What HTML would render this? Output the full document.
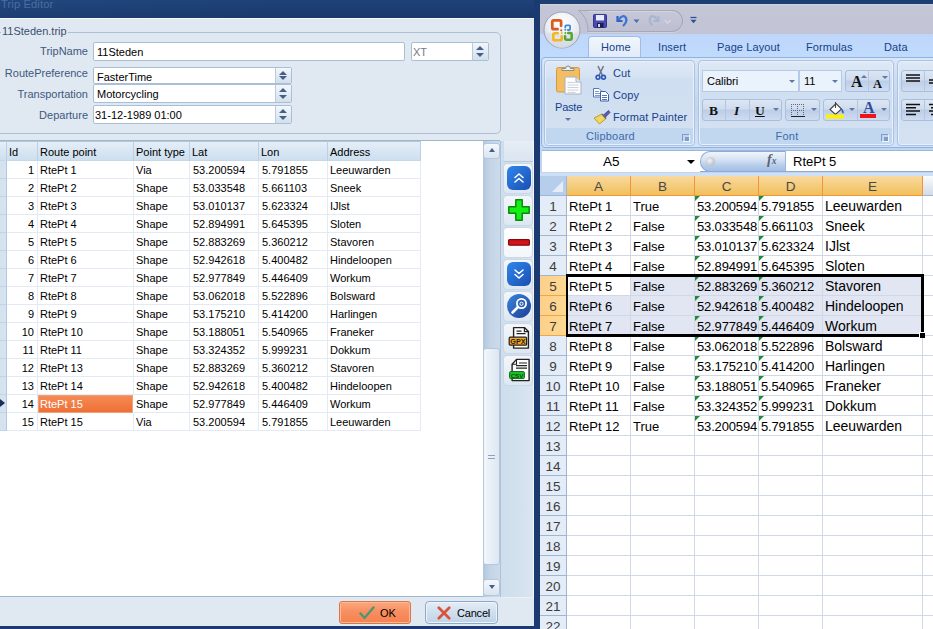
<!DOCTYPE html>
<html><head><meta charset="utf-8"><title>Trip Editor</title>
<style>
html,body{margin:0;padding:0}
body{width:933px;height:629px;overflow:hidden;position:relative;background:#1b3b70;font-family:"Liberation Sans",sans-serif;font-size:11px;color:#000}
div,span,i,b{box-sizing:border-box}
.abs{position:absolute}
/* ---------- Trip editor ---------- */
#te{position:absolute;left:0;top:0;width:534px;height:629px;overflow:hidden;background:#e0e9f1}
#te .title{position:absolute;left:0;top:0;width:534px;height:18px;background:linear-gradient(90deg,rgba(70,120,190,.08),rgba(40,80,150,0) 55%),linear-gradient(#1e4279,#1b3c70 60%,#1a396b);color:#4b6e9f;font-size:11.2px;line-height:14px;overflow:hidden}
#te .title span{position:absolute;left:1px;top:-3px;white-space:nowrap;letter-spacing:0.1px}
#te .topline{position:absolute;left:0;top:18px;width:534px;height:1px;background:#f6f9fc}
#te .botdark{position:absolute;left:0;top:626px;width:534px;height:3px;background:#1b3b70}
.gb{position:absolute;left:-6px;top:32px;width:507px;height:102px;border:1px solid #abc0d7;border-radius:5px}
.gbl{position:absolute;left:1px;top:24px;padding:0 1px 0 1px;background:#e0e9f1;color:#3a4f6e;font-size:11px;line-height:14px;white-space:nowrap}
.lbl{position:absolute;left:0;width:88px;text-align:right;color:#41587e;font-size:11px;line-height:14px;white-space:nowrap}
.inp{position:absolute;background:#fff;border:1px solid #a9bfd6;border-radius:2px;font-size:11px;line-height:14px;white-space:nowrap;overflow:hidden}
.inp span{position:absolute;left:3px;top:2px}
.spin{position:absolute;right:0;top:0;bottom:0;width:16px;border-left:1px solid #b9cbdf;background:linear-gradient(#f3f7fb,#d3dfec)}
.spin:before,.spin:after{content:"";position:absolute;left:3px;border-left:4px solid transparent;border-right:4px solid transparent}
.spin:before{top:3px;border-bottom:4px solid #44608a}
.spin:after{bottom:3px;border-top:4px solid #44608a}
/* grid */
.grid{position:absolute;left:0;top:0;width:500px;height:629px}
.gridbg{position:absolute;left:0;top:140px;width:500px;height:457px;background:#fff;border-top:1px solid #9fb6cf;border-bottom:1px solid #9fb6cf}
.ghead{position:absolute;top:141px;height:20px;border-top:1px solid #b4c6da;background:linear-gradient(#e4eef7,#cddfef);border-right:1px solid #bccfe3;border-bottom:1px solid #c6d7e8;font-size:11px;line-height:15px;white-space:nowrap;overflow:hidden;color:#000}
.ghead span{position:absolute;left:2px;top:3px}
.grow{position:absolute;left:0;width:421px;height:18px}
.gind{position:absolute;left:0;top:0;width:7px;height:18px;background:#d5e2f0;border-right:1px solid #b3c8de;border-bottom:1px solid #c2d3e6}
.gc{position:absolute;top:0;height:18px;border-right:1px solid #e3eaf3;border-bottom:1px solid #e3eaf3;font-size:11px;line-height:19px;padding-left:2px;white-space:nowrap;overflow:hidden}
.gc.id{text-align:right;padding-right:3px;padding-left:0}
.gc.num{padding-left:3px}
.gc.sel{background:linear-gradient(#f58a54,#ee7036);color:#fff;border:1px solid #f2a078;line-height:17px;padding-left:1px;box-shadow:1px 0 0 #fff}
.rowarrow{position:absolute;left:0;top:399px;width:0;height:0;border-top:4.500px solid transparent;border-bottom:4.500px solid transparent;border-left:5px solid #1b2f55}
.vsb{position:absolute;left:483px;top:141px;width:18px;height:456px;background:linear-gradient(90deg,#b2c6dc,#c3d4e7 40%,#ccdbea);border-right:1px solid #aec1d8}
.sbtn{position:absolute;left:0px;width:17px;height:16px;border:1px solid #b4c7dc;border-radius:3px;background:linear-gradient(#f4f8fc,#d9e4f0)}
.sbtn i{position:absolute;left:4.5px;border-left:3.5px solid transparent;border-right:3.5px solid transparent}
.sbtn i.up{top:4px;border-bottom:4px solid #44608a}
.sbtn i.dn{top:5px;border-top:4px solid #44608a}
.sthumb{position:absolute;left:0;top:207px;width:17px;height:217px;border:1px solid #b4c7dc;border-radius:3px;background:linear-gradient(90deg,#f2f6fb,#dde7f2)}
.sthumb i{position:absolute;left:4px;top:106px;width:7px;height:4px;border-top:1px solid #8aa2c0;border-bottom:1px solid #8aa2c0}

.sidebg{position:absolute;left:501px;top:141px;width:33px;height:457px;background:linear-gradient(90deg,#cedeec,#d4e2ef 70%,#dbe6f1);border-right:1px solid #f2f6fa;border-bottom:1px solid #eaf0f6}
.side{position:absolute;left:503px;top:141px;width:30px;height:260px}
.sblank{position:absolute;left:0;top:0;width:30px;height:21px;background:linear-gradient(#e6edf5,#dbe5f0);border-bottom:1px solid #b9c9dc;border-left:1px solid #cfdbe8}
.sb{position:absolute;left:0;width:30px;height:31px;border:1px solid #c9d7e6;border-radius:4px;background:linear-gradient(#f3f7fb,#dde7f1)}
.sb.white{background:linear-gradient(#fff,#f3f6fa)}
.sb svg{position:absolute}
.btn{position:absolute;top:601px;width:72px;height:23px;border-radius:3px;font-size:11px;line-height:21px}
.btn svg{position:absolute;top:4px}
.btn span{position:absolute;top:1px}
.btn.ok{left:339px;border:1px solid #dc7446;background:linear-gradient(#fba67d,#f78d5e 50%,#f5824f);box-shadow:inset 0 0 0 1px #fab999}
.btn.ok svg{left:19px}.btn.ok span{left:40px}
.btn.cancel{left:425px;width:73px;border:1px solid #8ea9c8;border-radius:4px;background:linear-gradient(#e4edf6,#d0dfee 50%,#bfd3e8);box-shadow:inset 0 0 0 1px #eef4fa}
.btn.cancel svg{left:10.500px;top:4px}.btn.cancel span{left:31px;letter-spacing:-0.2px}
.botline{position:absolute;left:0;top:596px;width:500px;height:1px;background:#9fb6cf}
/* ---------- Excel ---------- */
#xl{position:absolute;left:540px;top:0;width:393px;height:629px;overflow:hidden;background:#1d3e72;font-size:12px;color:#15428b}
.xtitle{position:absolute;left:0;top:4px;width:393px;height:30px;background:linear-gradient(#d2d3df,#c4c5d6 2px,#c2c3d5)}
.xtabs{position:absolute;left:0;top:34px;width:393px;height:596px;background:linear-gradient(#bdd6fa,#c1dbfd 25px,#bfdbff 25px)}
.qat{position:absolute;left:48px;top:10px;width:95px;height:22px;border:1px solid #a6a8bb;border-radius:0 11px 11px 0;border-left:none;background:linear-gradient(#c6c7d7,#bebfd1);box-shadow:inset 0 1px 0 #d4d5e1,0 1px 0 #d0d1de}
.orb{position:absolute;left:3px;top:11px;width:38px;height:38px}
.tab{position:absolute;top:40px;font-size:11px;line-height:14px;white-space:nowrap;color:#15428b;letter-spacing:0.1px}
.tab.home{left:48px;top:36px;width:53px;height:22px;padding:3px 0 0 12px;background:linear-gradient(#f1f6fd,#e1ebf8);border:1px solid #9dbce6;border-bottom:none;border-radius:4px 4px 0 0}
.ribbon{position:absolute;left:1px;top:57px;width:400px;height:91px;background:linear-gradient(#dbe7f6,#cddcf0 25%,#c3d6ee 60%,#d3e2f5);border:1px solid #8db2e3;border-radius:4px 0 0 4px}
.rg{position:absolute;top:60px;height:86px;border:1px solid #a8c3e6;border-radius:4px;background:linear-gradient(#dfe9f6,#d6e3f3 18%,#cfdef0 22%,#d3e1f2);box-shadow:inset 0 0 0 1px #e9f0fa}
.rgt{position:absolute;left:1px;right:1px;bottom:1px;height:16px;padding-right:18px;background:#c0d7ef;color:#3e6aaa;text-align:center;font-size:11px;line-height:17px;border-radius:0 0 3px 3px;letter-spacing:0.2px}
.dl{position:absolute;right:5px;bottom:4px;width:7px;height:7px;border-left:1px solid #7f9cc6;border-top:1px solid #7f9cc6;box-shadow:1px 1px 0 #eef4fc}
.dl:after{content:"";position:absolute;left:2px;top:2px;width:4px;height:4px;background:#7f9cc6;box-shadow:1px 1px 0 #eef4fc}
.rt{position:absolute;font-size:11px;line-height:16px;white-space:nowrap;color:#15428b;letter-spacing:0.1px}
.dd{position:absolute;width:0;height:0;border-left:3px solid transparent;border-right:3px solid transparent;border-top:3px solid #5f79a6}
.du{position:absolute;width:0;height:0;border-left:3px solid transparent;border-right:3px solid transparent;border-bottom:3px solid #5f79a6}
.combo{position:absolute;top:70px;height:22px;background:#eaf2fb;border:1px solid #b3cbe8;color:#000;font-size:11px;line-height:20px}
.combo span{position:absolute;left:4px;top:0}
.bg{position:absolute;height:22px;border:1px solid #a9bfdd;border-radius:3px;background:linear-gradient(#dce6f4,#cfdcee 45%,#bccde6 50%,#cedcf0);color:#111}
.bg u{position:absolute;top:0;width:1px;height:20px;background:#b4c6e0;text-decoration:none}
.bg span{position:absolute;line-height:20px}
.ser{font-family:"Liberation Serif",serif}
.fbar{position:absolute;left:0;top:148px;width:393px;height:28px;background:#bed6f3}
.fband{position:absolute;left:0;top:173px;width:393px;height:3px;background:#cfe0f5}
.fwhite{position:absolute;left:2px;top:150px;width:391px;height:22px;background:#fff;border-top:1px solid #9bb6da;border-bottom:1px solid #8ea9cf}
.namebox{position:absolute;left:2px;top:151px;width:158px;height:21px;background:#fff;color:#000;font-size:14px;line-height:21px}
.namebox span{position:absolute;left:61px;top:0;font-size:13.500px}
.ddk{position:absolute;left:145px;top:9px;width:0;height:0;border-left:4px solid transparent;border-right:4px solid transparent;border-top:4px solid #000}
.fpill{position:absolute;left:160px;top:151px;width:85px;height:21px;background:linear-gradient(#f0f5fb,#d6e3f3 40%,#b7cdeb 70%,#a2bfe7);border-radius:10px 0 0 10px;border:1px solid #8fabd3;border-right:none}
.fpill i{position:absolute;left:5px;top:5px;width:9px;height:9px;border-radius:5px;background:radial-gradient(circle at 40% 40%,#f4f4f6,#a3a9b8)}
.fx{position:absolute;left:66px;top:-2px;font-size:14px;font-style:italic;font-weight:bold;color:#5a6272;line-height:20px}
.fx small{font-size:9.500px}
.ftext{position:absolute;left:245px;top:151px;width:150px;height:20px;background:#fff;color:#000;font-size:13px;line-height:21px;padding-left:7px;border-left:1px solid #9db7da}
/* sheet */
.xl{position:absolute;left:-540px;top:0;width:933px;height:629px}
.xcorner{position:absolute;left:540px;top:176px;width:27px;height:20px;background:#b6cdec;border-right:1px solid #9eb6d8;border-bottom:1px solid #9eb6d8}
.xcorner i{position:absolute;right:3px;bottom:3px;width:0;height:0;border-left:11px solid transparent;border-bottom:11px solid #e4ecf7}
.xch{position:absolute;top:176px;height:20px;background:linear-gradient(#f9fcfd,#d3dbe9);border-right:1px solid #9eb6ce;border-bottom:1px solid #9eb6ce;text-align:center;font-size:13.500px;line-height:22px;color:#484848}
.xch.hot{background:linear-gradient(#f9d99f,#f1c05c);border-right:1px solid #f29536;border-bottom:1px solid #f29536}
.xrow{position:absolute;left:0;width:933px;height:20px}
.xrh{position:absolute;left:540px;top:0;width:27px;height:20px;background:#e4ecf7;border-right:1px solid #9eb6ce;border-bottom:1px solid #9eb6ce;text-align:center;font-size:13.500px;line-height:21px;color:#3c3c3c}
.xrh.hot{background:linear-gradient(90deg,#fbd08a,#ffd891);border-bottom:1px solid #eda648;border-right:1px solid #eda648}
.xc{position:absolute;top:0;height:20px;background:#fff;border-right:1px solid #d0d7e5;border-bottom:1px solid #d0d7e5;font-size:13px;line-height:21px;color:#000;padding-left:2px;white-space:nowrap;overflow:visible}
.xc.e{font-size:14px}
.xc.s{background:#e2e6f3}
.xc b{position:absolute;left:0;top:0;width:0;height:0;border-right:5px solid transparent;border-top:5px solid #1e8a3c}
.xc.n{letter-spacing:-0.15px}
.xsel{position:absolute;left:566px;top:274px;width:358px;height:63px;border:3px solid #000;border-left-width:2px}
.xselh{position:absolute;left:919px;top:332px;width:6px;height:6px;background:#000;border:1px solid #fff;border-right:none;border-bottom:none}
.spin.dis:before{border-bottom-color:#8390a5;left:4px;border-left-width:3px;border-right-width:3px;border-bottom-width:3px;top:4px}
.spin.dis:after{border-top-color:#8390a5;left:4px;border-left-width:3px;border-right-width:3px;border-top-width:3px;bottom:4px}

</style></head><body>
<div id="te">
<div class="title"><span>Trip Editor</span></div>
<div class="topline"></div>
<div class="gb"></div>
<div class="gbl">11Steden.trip</div>
<div class="lbl" style="top:44px">TripName</div>
<div class="inp" style="left:93px;top:42px;width:312px;height:19px"><span>11Steden</span></div>
<div class="inp" style="left:411px;top:42px;width:78px;height:19px;color:#777b82"><span style="left:1px">XT</span><div class="spin"></div></div>
<div class="lbl" style="top:66px">RoutePreference</div>
<div class="inp" style="left:93px;top:67px;width:199px;height:17px"><span>FasterTime</span><div class="spin"></div></div>
<div class="lbl" style="top:87px">Transportation</div>
<div class="inp" style="left:93px;top:84px;width:199px;height:19px"><span style="top:2px">Motorcycling</span><div class="spin"></div></div>
<div class="lbl" style="top:108px">Departure</div>
<div class="inp" style="left:93px;top:105px;width:199px;height:19px"><span style="left:1px">31-12-1989 01:00</span><div class="spin"></div></div>
<div class="gridbg"></div>
<div class="grid">
<div class="ghead" style="left:0;width:7px"></div>
<div class="ghead" style="left:7px;width:31px"><span>Id</span></div>
<div class="ghead" style="left:38px;width:96px"><span>Route point</span></div>
<div class="ghead" style="left:134px;width:56px"><span>Point type</span></div>
<div class="ghead" style="left:190px;width:69px"><span>Lat</span></div>
<div class="ghead" style="left:259px;width:69px"><span>Lon</span></div>
<div class="ghead" style="left:328px;width:93px"><span>Address</span></div>
<div class="grow" style="top:161px">
<div class="gind"></div>
<div class="gc id" style="left:7px;width:31px">1</div>
<div class="gc" style="left:38px;width:96px">RtePt 1</div>
<div class="gc" style="left:134px;width:56px">Via</div>
<div class="gc num" style="left:190px;width:69px">53.200594</div>
<div class="gc num" style="left:259px;width:69px">5.791855</div>
<div class="gc" style="left:328px;width:93px">Leeuwarden</div>
</div>
<div class="grow" style="top:179px">
<div class="gind"></div>
<div class="gc id" style="left:7px;width:31px">2</div>
<div class="gc" style="left:38px;width:96px">RtePt 2</div>
<div class="gc" style="left:134px;width:56px">Shape</div>
<div class="gc num" style="left:190px;width:69px">53.033548</div>
<div class="gc num" style="left:259px;width:69px">5.661103</div>
<div class="gc" style="left:328px;width:93px">Sneek</div>
</div>
<div class="grow" style="top:197px">
<div class="gind"></div>
<div class="gc id" style="left:7px;width:31px">3</div>
<div class="gc" style="left:38px;width:96px">RtePt 3</div>
<div class="gc" style="left:134px;width:56px">Shape</div>
<div class="gc num" style="left:190px;width:69px">53.010137</div>
<div class="gc num" style="left:259px;width:69px">5.623324</div>
<div class="gc" style="left:328px;width:93px">IJlst</div>
</div>
<div class="grow" style="top:215px">
<div class="gind"></div>
<div class="gc id" style="left:7px;width:31px">4</div>
<div class="gc" style="left:38px;width:96px">RtePt 4</div>
<div class="gc" style="left:134px;width:56px">Shape</div>
<div class="gc num" style="left:190px;width:69px">52.894991</div>
<div class="gc num" style="left:259px;width:69px">5.645395</div>
<div class="gc" style="left:328px;width:93px">Sloten</div>
</div>
<div class="grow" style="top:233px">
<div class="gind"></div>
<div class="gc id" style="left:7px;width:31px">5</div>
<div class="gc" style="left:38px;width:96px">RtePt 5</div>
<div class="gc" style="left:134px;width:56px">Shape</div>
<div class="gc num" style="left:190px;width:69px">52.883269</div>
<div class="gc num" style="left:259px;width:69px">5.360212</div>
<div class="gc" style="left:328px;width:93px">Stavoren</div>
</div>
<div class="grow" style="top:251px">
<div class="gind"></div>
<div class="gc id" style="left:7px;width:31px">6</div>
<div class="gc" style="left:38px;width:96px">RtePt 6</div>
<div class="gc" style="left:134px;width:56px">Shape</div>
<div class="gc num" style="left:190px;width:69px">52.942618</div>
<div class="gc num" style="left:259px;width:69px">5.400482</div>
<div class="gc" style="left:328px;width:93px">Hindeloopen</div>
</div>
<div class="grow" style="top:269px">
<div class="gind"></div>
<div class="gc id" style="left:7px;width:31px">7</div>
<div class="gc" style="left:38px;width:96px">RtePt 7</div>
<div class="gc" style="left:134px;width:56px">Shape</div>
<div class="gc num" style="left:190px;width:69px">52.977849</div>
<div class="gc num" style="left:259px;width:69px">5.446409</div>
<div class="gc" style="left:328px;width:93px">Workum</div>
</div>
<div class="grow" style="top:287px">
<div class="gind"></div>
<div class="gc id" style="left:7px;width:31px">8</div>
<div class="gc" style="left:38px;width:96px">RtePt 8</div>
<div class="gc" style="left:134px;width:56px">Shape</div>
<div class="gc num" style="left:190px;width:69px">53.062018</div>
<div class="gc num" style="left:259px;width:69px">5.522896</div>
<div class="gc" style="left:328px;width:93px">Bolsward</div>
</div>
<div class="grow" style="top:305px">
<div class="gind"></div>
<div class="gc id" style="left:7px;width:31px">9</div>
<div class="gc" style="left:38px;width:96px">RtePt 9</div>
<div class="gc" style="left:134px;width:56px">Shape</div>
<div class="gc num" style="left:190px;width:69px">53.175210</div>
<div class="gc num" style="left:259px;width:69px">5.414200</div>
<div class="gc" style="left:328px;width:93px">Harlingen</div>
</div>
<div class="grow" style="top:323px">
<div class="gind"></div>
<div class="gc id" style="left:7px;width:31px">10</div>
<div class="gc" style="left:38px;width:96px">RtePt 10</div>
<div class="gc" style="left:134px;width:56px">Shape</div>
<div class="gc num" style="left:190px;width:69px">53.188051</div>
<div class="gc num" style="left:259px;width:69px">5.540965</div>
<div class="gc" style="left:328px;width:93px">Franeker</div>
</div>
<div class="grow" style="top:341px">
<div class="gind"></div>
<div class="gc id" style="left:7px;width:31px">11</div>
<div class="gc" style="left:38px;width:96px">RtePt 11</div>
<div class="gc" style="left:134px;width:56px">Shape</div>
<div class="gc num" style="left:190px;width:69px">53.324352</div>
<div class="gc num" style="left:259px;width:69px">5.999231</div>
<div class="gc" style="left:328px;width:93px">Dokkum</div>
</div>
<div class="grow" style="top:359px">
<div class="gind"></div>
<div class="gc id" style="left:7px;width:31px">12</div>
<div class="gc" style="left:38px;width:96px">RtePt 13</div>
<div class="gc" style="left:134px;width:56px">Shape</div>
<div class="gc num" style="left:190px;width:69px">52.883269</div>
<div class="gc num" style="left:259px;width:69px">5.360212</div>
<div class="gc" style="left:328px;width:93px">Stavoren</div>
</div>
<div class="grow" style="top:377px">
<div class="gind"></div>
<div class="gc id" style="left:7px;width:31px">13</div>
<div class="gc" style="left:38px;width:96px">RtePt 14</div>
<div class="gc" style="left:134px;width:56px">Shape</div>
<div class="gc num" style="left:190px;width:69px">52.942618</div>
<div class="gc num" style="left:259px;width:69px">5.400482</div>
<div class="gc" style="left:328px;width:93px">Hindeloopen</div>
</div>
<div class="grow" style="top:395px">
<div class="gind"></div>
<div class="gc id" style="left:7px;width:31px">14</div>
<div class="gc sel" style="left:38px;width:95px">RtePt 15</div>
<div class="gc" style="left:134px;width:56px">Shape</div>
<div class="gc num" style="left:190px;width:69px">52.977849</div>
<div class="gc num" style="left:259px;width:69px">5.446409</div>
<div class="gc" style="left:328px;width:93px">Workum</div>
</div>
<div class="grow" style="top:413px">
<div class="gind"></div>
<div class="gc id" style="left:7px;width:31px">15</div>
<div class="gc" style="left:38px;width:96px">RtePt 15</div>
<div class="gc" style="left:134px;width:56px">Via</div>
<div class="gc num" style="left:190px;width:69px">53.200594</div>
<div class="gc num" style="left:259px;width:69px">5.791855</div>
<div class="gc" style="left:328px;width:93px">Leeuwarden</div>
</div>
<div class="rowarrow"></div>
</div><!-- scrollbar -->
<div class="vsb">
<div class="sbtn" style="top:2px"><i class="up"></i></div>
<div class="sthumb"><i></i></div>
<div class="sbtn" style="top:438px;height:17px"><i class="dn"></i></div>
</div>
<!-- side buttons -->
<div class="sidebg"></div>
<div class="side">
<div class="sblank"></div>
<div class="sb" style="top:22px"><svg width="24" height="24" viewBox="0 0 24 24" style="left:3px;top:2px"><defs><linearGradient id="bl" x1="0" y1="0" x2="1" y2="1"><stop offset="0" stop-color="#2f86ee"/><stop offset="1" stop-color="#1a4fb0"/></linearGradient></defs><rect width="24" height="24" rx="6" fill="url(#bl)"/><path d="M8 11.5 L12 8 L16 11.5 M8 16 L12 12.5 L16 16" fill="none" stroke="#fff" stroke-width="1.6" stroke-linecap="round" stroke-linejoin="round"/></svg></div>
<div class="sb" style="top:54px"><svg width="24" height="24" viewBox="0 0 24 24" style="left:3px;top:2px"><path d="M8.800 1.800h6.400v7h7v6.400h-7v7h-6.400v-7h-7v-6.400h7z" fill="#14f014" stroke="#0a8a0a" stroke-width="1.500" stroke-linejoin="round"/></svg></div>
<div class="sb white" style="top:86px"><svg width="24" height="9" viewBox="0 0 24 9" style="left:3px;top:10px"><rect x="1.600" y="1.600" width="20.800" height="5.600" rx="1" fill="#d41219" stroke="#86090e" stroke-width="1.200"/></svg></div>
<div class="sb" style="top:118px"><svg width="24" height="24" viewBox="0 0 24 24" style="left:3px;top:2px"><rect width="24" height="24" rx="6" fill="url(#bl)"/><path d="M8 8 L12 11.5 L16 8 M8 12.5 L12 16 L16 12.5" fill="none" stroke="#fff" stroke-width="1.6" stroke-linecap="round" stroke-linejoin="round"/></svg></div>
<div class="sb" style="top:150px"><svg width="24" height="24" viewBox="0 0 24 24" style="left:3px;top:2px"><defs><linearGradient id="bl2" x1="0" y1="0" x2="1" y2="1"><stop offset="0" stop-color="#3a86e0"/><stop offset="1" stop-color="#1c3f94"/></linearGradient></defs><circle cx="12" cy="12" r="12" fill="url(#bl2)"/><circle cx="14.5" cy="9.5" r="4.6" fill="none" stroke="#fff" stroke-width="1.8"/><circle cx="14.5" cy="9.8" r="1.6" fill="none" stroke="#fff" stroke-width="1"/><path d="M11 13 L5.5 18.5" stroke="#fff" stroke-width="2.6" stroke-linecap="round"/></svg></div>
<div class="sb" style="top:182px"><svg width="24" height="26" viewBox="0 0 24 26" style="left:3px;top:2px"><path d="M6.600 1.600h10.800l4 4v16.500h-14.800z" fill="#fff" stroke="#222" stroke-width="1.400" stroke-linejoin="round"/><path d="M17.400 1.600v4h4" fill="none" stroke="#222" stroke-width="1.200"/><path d="M9.500 5.200h5M9.500 7.600h9" stroke="#222" stroke-width="1.200"/><rect x="2.200" y="11.200" width="17.400" height="8" rx="1" fill="#f2a51d" stroke="#222" stroke-width="1.200"/><text x="10.900" y="18" font-family="Liberation Sans, sans-serif" font-size="7.200" font-weight="bold" text-anchor="middle" fill="#222">GPX</text></svg></div>
<div class="sb" style="top:214px"><svg width="24" height="26" viewBox="0 0 24 26" style="left:3px;top:2px"><path d="M9.500 1.400h12.600v21.200h-17v-16.400z" fill="#fff" stroke="#222" stroke-width="1.400" stroke-linejoin="round"/><path d="M9.500 1.400v4.800h-4.400" fill="none" stroke="#222" stroke-width="1.100"/><path d="M12 5h8M9 7.600h11M9 10.200h11" stroke="#222" stroke-width="1.200"/><rect x="2.600" y="13.600" width="14.800" height="7" rx="1" fill="#1fc128" stroke="#0d6a14" stroke-width="1"/><text x="10" y="19.600" font-family="Liberation Sans, sans-serif" font-size="6.200" font-weight="bold" text-anchor="middle" fill="#0b4d10">CSV</text></svg></div>
</div>
<!-- bottom buttons -->
<div class="btn ok"><svg width="16" height="14" viewBox="0 0 16 14"><path d="M1.500 7.500 L5.500 12 L14.500 1.500" fill="none" stroke="#4f9672" stroke-width="2.400" stroke-linecap="round" stroke-linejoin="round"/></svg><span>OK</span></div>
<div class="btn cancel"><svg width="14" height="14" viewBox="0 0 14 14"><path d="M1.800 1.800 L12.200 12.200 M12.200 1.800 L1.800 12.200" fill="none" stroke="#d8533a" stroke-width="2.700" stroke-linecap="round"/></svg><span>Cancel</span></div>
<div class="botdark"></div>
</div>
<div id="xl">
<div class="xtitle"></div>
<div class="xtabs"></div>
<div class="qat"></div>
<svg class="abs" style="left:30px;top:8px" width="20" height="26" viewBox="30 8 20 26"><path d="M38.600 10.500 L48.500 10.500 L48.500 31.500 L48 31.500 A26 26 0 0 0 38.600 10.500 Z" fill="#c2c3d4"/><path d="M38.600 10.500 A26 26 0 0 1 48 31.500" fill="none" stroke="#a6a8bb" stroke-width="1"/><path d="M38.600 10.500 H49" stroke="#a6a8bb" stroke-width="1"/><path d="M47.500 31.500 H49" stroke="#a6a8bb" stroke-width="1"/></svg>
<div class="orb"><svg width="38" height="38" viewBox="0 0 38 38"><defs><radialGradient id="og" cx="0.5" cy="0.3" r="0.8"><stop offset="0" stop-color="#ffffff"/><stop offset="0.55" stop-color="#e9edf3"/><stop offset="1" stop-color="#b8c0cf"/></radialGradient></defs><circle cx="19" cy="19" r="18" fill="url(#og)" stroke="#9aa3b8" stroke-width="1"/><path d="M3 21 A16 16 0 0 0 35 21 Q19 26 3 21z" fill="#d9dee8" opacity="0.7"/>
<path d="M18.100 14.800 V10.800 Q18.100 9.300 16.600 9.300 H10.800 Q9.300 9.300 9.300 10.800 V16.700 Q9.300 18.200 10.800 18.200 H14.600" fill="none" stroke="#dc5a1c" stroke-width="2.700" stroke-linecap="round"/>
<path d="M22.300 16.400 V15.200 Q22.300 14.300 23.200 14.300 H26.200 Q27.100 14.300 27.100 15.200 V18.100 Q27.100 19 26.200 19 H24.900" fill="none" stroke="#3d8ad6" stroke-width="1.800" stroke-linecap="round"/>
<path d="M14.800 22.200 H11.600 Q10.300 22.200 10.300 23.500 V27.900 Q10.300 29.200 11.600 29.200 H17.400 Q18.700 29.200 18.700 27.900 V25.400" fill="none" stroke="#f4b81e" stroke-width="2.600" stroke-linecap="round"/>
<path d="M25.200 22.100 H27.500 Q28.700 22.100 28.700 23.300 V27.600 Q28.700 28.800 27.500 28.800 H23.300 Q22.100 28.800 22.100 27.600 V25.300" fill="none" stroke="#58a42e" stroke-width="2.500" stroke-linecap="round"/>
<circle cx="18.300" cy="19.300" r="1.100" fill="#dc5a1c"/><circle cx="22.300" cy="18.800" r="1" fill="#3d8ad6"/><circle cx="18.800" cy="22.100" r="1" fill="#f4b81e"/><circle cx="22.300" cy="22.100" r="1" fill="#58a42e"/></svg></div>
<svg class="abs" style="left:53px;top:12px" width="110" height="18" viewBox="0 0 110 18">
<rect x="0.500" y="2.500" width="13" height="13" rx="1" fill="#4a4ab2" stroke="#34348c" stroke-width="1"/><rect x="3" y="3" width="8" height="5.500" fill="#e9ecf8"/><rect x="4" y="11" width="6.500" height="4.500" fill="#1d1d4a"/><rect x="5" y="12" width="2" height="3" fill="#d0d4ee"/>
<path d="M24.500 4 L24.500 9 L29.500 9" fill="none" stroke="#2f62c4" stroke-width="2.200"/><path d="M25.500 8 Q30 1.500 33 6 Q34.500 10 30 14" fill="none" stroke="#3d74d6" stroke-width="2.300"/>
<path d="M40.500 7.500 h6 l-3 3.500z" fill="#4f6fae"/>
<path d="M65.500 4 L65.500 9 L60.500 9" fill="none" stroke="#a9b4cf" stroke-width="2"/><path d="M64.500 8 Q60 1.500 57 6 Q55.500 10 59.500 13.500" fill="none" stroke="#a9b4cf" stroke-width="2.100"/>
<path d="M71.500 8 l3 3 l3 -3" fill="none" stroke="#d3d7e6" stroke-width="1.300"/>
<path d="M97.500 5.500 h6" stroke="#2d4f9a" stroke-width="1.300"/><path d="M97.500 7.800 h6 l-3 3.400z" fill="#2d4f9a"/>
</svg>
<div class="tab home">Home</div>
<div class="tab" style="left:118px">Insert</div>
<div class="tab" style="left:177px">Page Layout</div>
<div class="tab" style="left:266px">Formulas</div>
<div class="tab" style="left:344px">Data</div>
<div class="ribbon"></div>
<!-- clipboard group -->
<div class="rg" style="left:4px;width:151px"><div class="rgt">Clipboard</div><i class="dl"></i></div>
<svg class="abs" style="left:15px;top:64px" width="28" height="32" viewBox="0 0 28 32">
<rect x="1.500" y="3.500" width="23" height="24.500" rx="2" fill="#f3bd62" stroke="#d39a40" stroke-width="1"/><path d="M7 6.500 h12 v-2 h-3.500 a2.500 2.500 0 0 0 -5 0 h-3.500z" fill="#ececec" stroke="#8b8b8b" stroke-width="1"/><path d="M10 13h11l5 5v12h-16z" fill="#fdfdfd" stroke="#a8b2c2" stroke-width="1"/><path d="M21 13v5h5" fill="#e4e8ee" stroke="#a8b2c2" stroke-width="1"/><path d="M12.500 18.500h8M12.500 21h11M12.500 23.500h11M12.500 26h11M12.500 28.400h8" stroke="#ccd2dc" stroke-width="1"/></svg>
<div class="rt" style="left:15px;top:99px;letter-spacing:-0.2px">Paste</div>
<i class="dd" style="left:25px;top:118px"></i>
<svg class="abs" style="left:55px;top:65px" width="12" height="16" viewBox="0 0 12 16"><path d="M3 1 L7.500 10.500 M8.500 1 L4 10.500" stroke="#6c7686" stroke-width="1.500"/><circle cx="3" cy="12.300" r="1.900" fill="none" stroke="#2f56b8" stroke-width="1.600"/><circle cx="8.500" cy="12.300" r="1.900" fill="none" stroke="#2f56b8" stroke-width="1.600"/></svg>
<div class="rt" style="left:73px;top:65px">Cut</div>
<svg class="abs" style="left:53px;top:88px" width="17" height="14" viewBox="0 0 17 14"><path d="M0.500 0.500h5.500l2.500 2.500v6h-8z" fill="#fff" stroke="#5a78b4" stroke-width="1"/><path d="M2 3.500h4M2 5.500h5M2 7.500h5" stroke="#7f9ad0" stroke-width="1"/><path d="M7.500 3.500h5l3 3v6.500h-8z" fill="#fff" stroke="#3a5ea8" stroke-width="1"/><path d="M9 7.500h5M9 9.500h5M9 11.500h5" stroke="#4f74c0" stroke-width="1"/></svg>
<div class="rt" style="left:73px;top:87px">Copy</div>
<svg class="abs" style="left:53px;top:109px" width="18" height="16" viewBox="0 0 18 16"><path d="M10.500 6 L15.500 1.500 L17 3.500 L12.500 8z" fill="#5b5bb8" stroke="#38388a" stroke-width="0.800"/><path d="M1 9 L9 5 L13 9.500 L6.500 15z" fill="#f2d660" stroke="#b3952a" stroke-width="0.900"/><path d="M9 5 L13 9.500" stroke="#666" stroke-width="1.400"/></svg>
<div class="rt" style="left:73px;top:109px">Format Painter</div>
<!-- font group -->
<div class="rg" style="left:158px;width:196px"><div class="rgt">Font</div><i class="dl"></i></div>
<div class="combo" style="left:162px;width:97px"><span>Calibri</span><i class="dd" style="left:86px;top:9px"></i></div>
<div class="combo" style="left:259px;width:43px"><span>11</span><i class="dd" style="left:32px;top:9px"></i></div>
<div class="bg" style="left:305px;top:70px;width:45px"><u style="left:22px"></u>
<span class="ser" style="left:5px;top:1px;font-size:16px;font-weight:bold">A</span><i class="du" style="left:15px;top:4px"></i>
<span class="ser" style="left:27px;top:3px;font-size:12.500px;font-weight:bold">A</span><i class="dd" style="left:36px;top:5px"></i></div>
<div class="bg" style="left:162px;top:99px;width:80px"><u style="left:22px"></u><u style="left:46px"></u>
<span class="ser" style="left:6px;top:1px;font-size:13.500px;font-weight:bold">B</span>
<span class="ser" style="left:31px;top:1px;font-size:13.500px;font-weight:bold;font-style:italic">I</span>
<span class="ser" style="left:52px;top:1px;font-size:13.500px;font-weight:bold;text-decoration:underline">U</span><i class="dd" style="left:70px;top:8px"></i></div>
<div class="bg" style="left:245px;top:99px;width:35px"><svg class="abs" style="left:4px;top:3px" width="15" height="15" viewBox="0 0 15 15" shape-rendering="crispEdges"><path d="M1 1.500h13M1 7.500h13M1.500 1v12M7.500 1v12M13.500 1v12" stroke="#5c6780" stroke-width="1" stroke-dasharray="1 1"/><path d="M0.500 13.500h14" stroke="#222" stroke-width="1.600"/></svg><i class="dd" style="left:25px;top:8px"></i></div>
<div class="bg" style="left:283px;top:99px;width:67px"><u style="left:33px"></u>
<svg class="abs" style="left:2px;top:1px" width="20" height="18" viewBox="0 0 20 18"><path d="M4 8.500 L10 2.500 L15.500 8 L9.500 13.500z" fill="#fff" stroke="#444" stroke-width="1.100"/><path d="M9.500 1 v6" stroke="#444" stroke-width="1.100"/><path d="M15.500 7.500 q3 2 2 5.500 q-2.500 -1.500 -2 -5.500z" fill="#2d5fc8"/><rect x="0" y="13.500" width="18" height="4" fill="#fff200"/></svg><i class="dd" style="left:25px;top:8px"></i>
<span class="ser" style="left:39px;top:-2px;font-size:16px;font-weight:bold;color:#2a4f9c">A</span><div class="abs" style="left:36px;top:14px;width:16px;height:4px;background:#f01414"></div><i class="dd" style="left:57px;top:8px"></i></div>
<!-- align group -->
<div class="rg" style="left:357px;width:60px"></div>
<div class="bg" style="left:361px;top:70px;width:50px"><u style="left:22px"></u><svg class="abs" style="left:4px;top:3px" width="40" height="12" viewBox="0 0 40 12"><path d="M0 1h14M0 4h14M0 7h14M23 6h14M23 9h14" stroke="#111" stroke-width="1.400"/></svg></div>
<div class="bg" style="left:361px;top:99px;width:50px"><u style="left:22px"></u><svg class="abs" style="left:4px;top:3px" width="40" height="14" viewBox="0 0 40 14"><path d="M0 1.500h14M0 4.800h10M0 8.100h14M0 11.400h10M23 1.500h14M25 4.800h10M23 8.100h14M25 11.400h10" stroke="#111" stroke-width="1.500"/></svg></div>
<!-- formula bar -->
<div class="fbar"></div><div class="fband"></div><div class="fwhite"></div>
<div class="namebox"><span>A5</span><i class="ddk"></i></div>
<div class="fpill"><i></i><span class="ser fx">f<small>x</small></span></div>
<div class="ftext">RtePt 5</div>
<div class="xl">
<div class="xcorner"><i></i></div>
<div class="xch hot" style="left:567px;width:64px">A</div>
<div class="xch hot" style="left:631px;width:64px">B</div>
<div class="xch hot" style="left:695px;width:64px">C</div>
<div class="xch hot" style="left:759px;width:64px">D</div>
<div class="xch hot" style="left:823px;width:100px">E</div>
<div class="xch" style="left:923px;width:64px"></div>
<div class="xrow" style="top:196px">
<div class="xrh">1</div>
<div class="xc" style="left:567px;width:64px">RtePt 1</div>
<div class="xc" style="left:631px;width:64px">True</div>
<div class="xc n" style="left:695px;width:64px"><b></b>53.200594</div>
<div class="xc n" style="left:759px;width:64px"><b></b>5.791855</div>
<div class="xc e" style="left:823px;width:100px">Leeuwarden</div>
<div class="xc" style="left:923px;width:64px"></div>
</div>
<div class="xrow" style="top:216px">
<div class="xrh">2</div>
<div class="xc" style="left:567px;width:64px">RtePt 2</div>
<div class="xc" style="left:631px;width:64px">False</div>
<div class="xc n" style="left:695px;width:64px"><b></b>53.033548</div>
<div class="xc n" style="left:759px;width:64px"><b></b>5.661103</div>
<div class="xc e" style="left:823px;width:100px">Sneek</div>
<div class="xc" style="left:923px;width:64px"></div>
</div>
<div class="xrow" style="top:236px">
<div class="xrh">3</div>
<div class="xc" style="left:567px;width:64px">RtePt 3</div>
<div class="xc" style="left:631px;width:64px">False</div>
<div class="xc n" style="left:695px;width:64px"><b></b>53.010137</div>
<div class="xc n" style="left:759px;width:64px"><b></b>5.623324</div>
<div class="xc e" style="left:823px;width:100px">IJlst</div>
<div class="xc" style="left:923px;width:64px"></div>
</div>
<div class="xrow" style="top:256px">
<div class="xrh">4</div>
<div class="xc" style="left:567px;width:64px">RtePt 4</div>
<div class="xc" style="left:631px;width:64px">False</div>
<div class="xc n" style="left:695px;width:64px"><b></b>52.894991</div>
<div class="xc n" style="left:759px;width:64px"><b></b>5.645395</div>
<div class="xc e" style="left:823px;width:100px">Sloten</div>
<div class="xc" style="left:923px;width:64px"></div>
</div>
<div class="xrow" style="top:276px">
<div class="xrh hot">5</div>
<div class="xc" style="left:567px;width:64px">RtePt 5</div>
<div class="xc s" style="left:631px;width:64px">False</div>
<div class="xc n s" style="left:695px;width:64px"><b></b>52.883269</div>
<div class="xc n s" style="left:759px;width:64px"><b></b>5.360212</div>
<div class="xc e s" style="left:823px;width:100px">Stavoren</div>
<div class="xc" style="left:923px;width:64px"></div>
</div>
<div class="xrow" style="top:296px">
<div class="xrh hot">6</div>
<div class="xc s" style="left:567px;width:64px">RtePt 6</div>
<div class="xc s" style="left:631px;width:64px">False</div>
<div class="xc n s" style="left:695px;width:64px"><b></b>52.942618</div>
<div class="xc n s" style="left:759px;width:64px"><b></b>5.400482</div>
<div class="xc e s" style="left:823px;width:100px">Hindeloopen</div>
<div class="xc" style="left:923px;width:64px"></div>
</div>
<div class="xrow" style="top:316px">
<div class="xrh hot">7</div>
<div class="xc s" style="left:567px;width:64px">RtePt 7</div>
<div class="xc s" style="left:631px;width:64px">False</div>
<div class="xc n s" style="left:695px;width:64px"><b></b>52.977849</div>
<div class="xc n s" style="left:759px;width:64px"><b></b>5.446409</div>
<div class="xc e s" style="left:823px;width:100px">Workum</div>
<div class="xc" style="left:923px;width:64px"></div>
</div>
<div class="xrow" style="top:336px">
<div class="xrh">8</div>
<div class="xc" style="left:567px;width:64px">RtePt 8</div>
<div class="xc" style="left:631px;width:64px">False</div>
<div class="xc n" style="left:695px;width:64px"><b></b>53.062018</div>
<div class="xc n" style="left:759px;width:64px"><b></b>5.522896</div>
<div class="xc e" style="left:823px;width:100px">Bolsward</div>
<div class="xc" style="left:923px;width:64px"></div>
</div>
<div class="xrow" style="top:356px">
<div class="xrh">9</div>
<div class="xc" style="left:567px;width:64px">RtePt 9</div>
<div class="xc" style="left:631px;width:64px">False</div>
<div class="xc n" style="left:695px;width:64px"><b></b>53.175210</div>
<div class="xc n" style="left:759px;width:64px"><b></b>5.414200</div>
<div class="xc e" style="left:823px;width:100px">Harlingen</div>
<div class="xc" style="left:923px;width:64px"></div>
</div>
<div class="xrow" style="top:376px">
<div class="xrh">10</div>
<div class="xc" style="left:567px;width:64px">RtePt 10</div>
<div class="xc" style="left:631px;width:64px">False</div>
<div class="xc n" style="left:695px;width:64px"><b></b>53.188051</div>
<div class="xc n" style="left:759px;width:64px"><b></b>5.540965</div>
<div class="xc e" style="left:823px;width:100px">Franeker</div>
<div class="xc" style="left:923px;width:64px"></div>
</div>
<div class="xrow" style="top:396px">
<div class="xrh">11</div>
<div class="xc" style="left:567px;width:64px">RtePt 11</div>
<div class="xc" style="left:631px;width:64px">False</div>
<div class="xc n" style="left:695px;width:64px"><b></b>53.324352</div>
<div class="xc n" style="left:759px;width:64px"><b></b>5.999231</div>
<div class="xc e" style="left:823px;width:100px">Dokkum</div>
<div class="xc" style="left:923px;width:64px"></div>
</div>
<div class="xrow" style="top:416px">
<div class="xrh">12</div>
<div class="xc" style="left:567px;width:64px">RtePt 12</div>
<div class="xc" style="left:631px;width:64px">True</div>
<div class="xc n" style="left:695px;width:64px"><b></b>53.200594</div>
<div class="xc n" style="left:759px;width:64px"><b></b>5.791855</div>
<div class="xc e" style="left:823px;width:100px">Leeuwarden</div>
<div class="xc" style="left:923px;width:64px"></div>
</div>
<div class="xrow" style="top:436px">
<div class="xrh">13</div>
<div class="xc" style="left:567px;width:64px"></div>
<div class="xc" style="left:631px;width:64px"></div>
<div class="xc n" style="left:695px;width:64px"></div>
<div class="xc n" style="left:759px;width:64px"></div>
<div class="xc e" style="left:823px;width:100px"></div>
<div class="xc" style="left:923px;width:64px"></div>
</div>
<div class="xrow" style="top:456px">
<div class="xrh">14</div>
<div class="xc" style="left:567px;width:64px"></div>
<div class="xc" style="left:631px;width:64px"></div>
<div class="xc n" style="left:695px;width:64px"></div>
<div class="xc n" style="left:759px;width:64px"></div>
<div class="xc e" style="left:823px;width:100px"></div>
<div class="xc" style="left:923px;width:64px"></div>
</div>
<div class="xrow" style="top:476px">
<div class="xrh">15</div>
<div class="xc" style="left:567px;width:64px"></div>
<div class="xc" style="left:631px;width:64px"></div>
<div class="xc n" style="left:695px;width:64px"></div>
<div class="xc n" style="left:759px;width:64px"></div>
<div class="xc e" style="left:823px;width:100px"></div>
<div class="xc" style="left:923px;width:64px"></div>
</div>
<div class="xrow" style="top:496px">
<div class="xrh">16</div>
<div class="xc" style="left:567px;width:64px"></div>
<div class="xc" style="left:631px;width:64px"></div>
<div class="xc n" style="left:695px;width:64px"></div>
<div class="xc n" style="left:759px;width:64px"></div>
<div class="xc e" style="left:823px;width:100px"></div>
<div class="xc" style="left:923px;width:64px"></div>
</div>
<div class="xrow" style="top:516px">
<div class="xrh">17</div>
<div class="xc" style="left:567px;width:64px"></div>
<div class="xc" style="left:631px;width:64px"></div>
<div class="xc n" style="left:695px;width:64px"></div>
<div class="xc n" style="left:759px;width:64px"></div>
<div class="xc e" style="left:823px;width:100px"></div>
<div class="xc" style="left:923px;width:64px"></div>
</div>
<div class="xrow" style="top:536px">
<div class="xrh">18</div>
<div class="xc" style="left:567px;width:64px"></div>
<div class="xc" style="left:631px;width:64px"></div>
<div class="xc n" style="left:695px;width:64px"></div>
<div class="xc n" style="left:759px;width:64px"></div>
<div class="xc e" style="left:823px;width:100px"></div>
<div class="xc" style="left:923px;width:64px"></div>
</div>
<div class="xrow" style="top:556px">
<div class="xrh">19</div>
<div class="xc" style="left:567px;width:64px"></div>
<div class="xc" style="left:631px;width:64px"></div>
<div class="xc n" style="left:695px;width:64px"></div>
<div class="xc n" style="left:759px;width:64px"></div>
<div class="xc e" style="left:823px;width:100px"></div>
<div class="xc" style="left:923px;width:64px"></div>
</div>
<div class="xrow" style="top:576px">
<div class="xrh">20</div>
<div class="xc" style="left:567px;width:64px"></div>
<div class="xc" style="left:631px;width:64px"></div>
<div class="xc n" style="left:695px;width:64px"></div>
<div class="xc n" style="left:759px;width:64px"></div>
<div class="xc e" style="left:823px;width:100px"></div>
<div class="xc" style="left:923px;width:64px"></div>
</div>
<div class="xrow" style="top:596px">
<div class="xrh">21</div>
<div class="xc" style="left:567px;width:64px"></div>
<div class="xc" style="left:631px;width:64px"></div>
<div class="xc n" style="left:695px;width:64px"></div>
<div class="xc n" style="left:759px;width:64px"></div>
<div class="xc e" style="left:823px;width:100px"></div>
<div class="xc" style="left:923px;width:64px"></div>
</div>
<div class="xrow" style="top:616px">
<div class="xrh">22</div>
<div class="xc" style="left:567px;width:64px"></div>
<div class="xc" style="left:631px;width:64px"></div>
<div class="xc n" style="left:695px;width:64px"></div>
<div class="xc n" style="left:759px;width:64px"></div>
<div class="xc e" style="left:823px;width:100px"></div>
<div class="xc" style="left:923px;width:64px"></div>
</div>
<div class="xsel"></div><div class="xselh"></div>
</div>
</body></html>
